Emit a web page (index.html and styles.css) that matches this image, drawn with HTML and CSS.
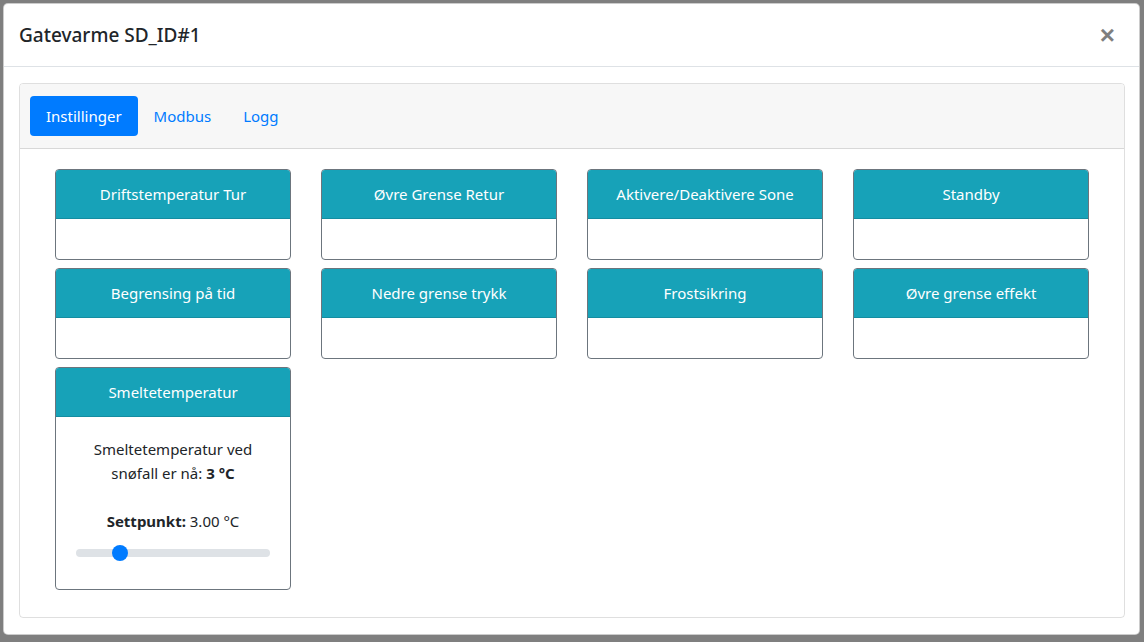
FILE: index.html
```html
<!DOCTYPE html>
<html lang="no">
<head>
<meta charset="utf-8">
<title>Gatevarme SD_ID#1</title>
<link rel="stylesheet" href="styles.css">
</head>
<body>
<div class="modal">
  <div class="modal-header">
    <h5 class="modal-title">Gatevarme SD_ID#1</h5>
    <button class="close" type="button">×</button>
  </div>
  <div class="modal-body">
    <div class="card">
      <div class="card-header">
        <ul class="nav-pills">
          <li><a class="pill active">Instillinger</a></li>
          <li><a class="pill">Modbus</a></li>
          <li><a class="pill">Logg</a></li>
        </ul>
      </div>
      <div class="card-body">
        <div class="grid">
          <div class="tile"><div class="tile-header">Driftstemperatur Tur</div><div class="tile-body"></div></div>
          <div class="tile"><div class="tile-header">Øvre Grense Retur</div><div class="tile-body"></div></div>
          <div class="tile"><div class="tile-header">Aktivere/Deaktivere Sone</div><div class="tile-body"></div></div>
          <div class="tile"><div class="tile-header">Standby</div><div class="tile-body"></div></div>
          <div class="tile"><div class="tile-header">Begrensing på tid</div><div class="tile-body"></div></div>
          <div class="tile"><div class="tile-header">Nedre grense trykk</div><div class="tile-body"></div></div>
          <div class="tile"><div class="tile-header">Frostsikring</div><div class="tile-body"></div></div>
          <div class="tile"><div class="tile-header">Øvre grense effekt</div><div class="tile-body"></div></div>
          <div class="tile">
            <div class="tile-header">Smeltetemperatur</div>
            <div class="tile-body">
              <p class="info">Smeltetemperatur ved snøfall er nå: <b>3 °C</b></p>
              <label class="setpoint"><b>Settpunkt:</b> 3.00 °C</label>
              <input class="range" type="range" min="0" max="15" step="0.5" value="3">
            </div>
          </div>
        </div>
      </div>
    </div>
  </div>
</div>
</body>
</html>
```
FILE: styles.css
```css
* { box-sizing: border-box; }
html, body { height: 100%; }
body {
  margin: 0;
  background: #7f7f7f;
  font-family: "Noto Sans", "Open Sans", sans-serif;
  font-size: 15px;
  line-height: 24px;
  color: #212529;
  overflow: hidden;
}
.modal {
  margin: 3px 4px 0 3px;
  width: 1137px;
  height: 632px;
  background: #fff;
  border: 1px solid rgba(0,0,0,.2);
  border-radius: 5px;
  display: flex;
  flex-direction: column;
}
.modal-header {
  display: flex;
  align-items: flex-start;
  justify-content: space-between;
  padding: 16px 16px 16px 15px;
  border-bottom: 1px solid #dee2e6;
}
.modal-title {
  margin: 0;
  font-size: 19px;
  font-weight: 500;
  line-height: 30px;
}
.close {
  background: transparent;
  border: 0;
  padding: 0 8px 0 0;
  margin: 0;
  font-family: "Liberation Sans", sans-serif;
  font-size: 26px;
  font-weight: 700;
  line-height: 30px;
  color: #000;
  opacity: .5;
}
.modal-body {
  padding: 16px 14px 16px 15px;
  flex: 1;
  display: flex;
}
.card {
  flex: 1;
  border: 1px solid rgba(0,0,0,.125);
  border-radius: 4px;
  display: flex;
  flex-direction: column;
}
.card-header {
  background: #f7f7f7;
  border-bottom: 1px solid rgba(0,0,0,.125);
  padding: 12px 10px;
  border-radius: 3px 3px 0 0;
}
.nav-pills {
  list-style: none;
  margin: 0;
  padding: 0;
  display: flex;
}
.pill {
  display: block;
  padding: 8px 16px;
  color: #007bff;
  border-radius: 4px;
}
.pill.active {
  background: #007bff;
  color: #fff;
}
.card-body {
  padding: 20px 20px;
  flex: 1;
}
.grid {
  display: grid;
  grid-template-columns: repeat(4, 236px);
  column-gap: 30px;
  row-gap: 8px;
  padding: 0 14px 0 15px;
  align-items: start;
}
.tile {
  border: 1px solid #6c757d;
  border-radius: 4px;
  overflow: hidden;
  text-align: center;
}
.tile-header {
  background: #17a2b8;
  color: #fff;
  padding: 12px 16px;
  border-bottom: 1px solid rgba(0,0,0,.125);
}
.tile-body {
  padding: 20px 20px;
  min-height: 40px;
}
.info { margin: 0 0 24px; }
.setpoint { display: block; margin-bottom: 9px; }
.range {
  -webkit-appearance: none;
  appearance: none;
  display: block;
  width: 100%;
  height: 22px;
  margin: 0 0 5px;
  padding: 0;
  background: transparent;
}
.range::-webkit-slider-runnable-track {
  height: 8px;
  background: #dee2e6;
  border-radius: 16px;
}
.range::-webkit-slider-thumb {
  -webkit-appearance: none;
  width: 16px;
  height: 16px;
  margin-top: -4px;
  border-radius: 50%;
  background: #007bff;
  border: 0;
}
```
